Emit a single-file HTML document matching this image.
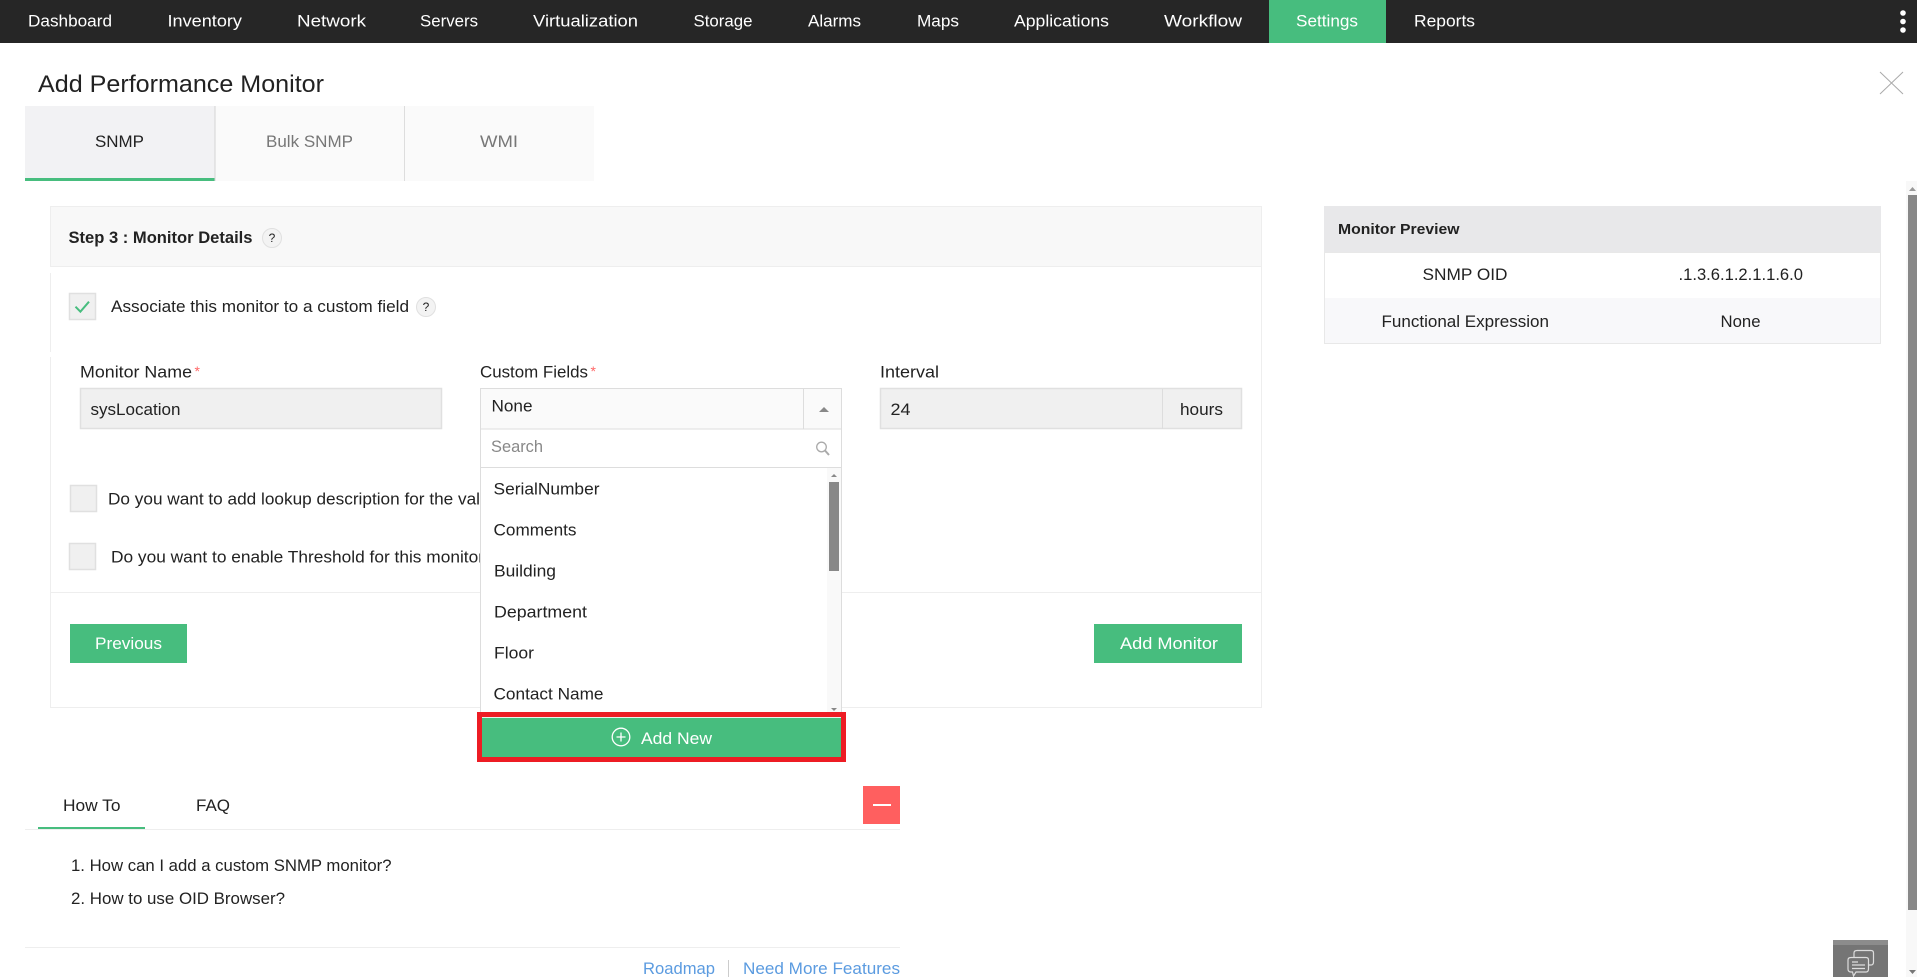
<!DOCTYPE html>
<html lang="en">
<head>
<meta charset="utf-8">
<title>Add Performance Monitor</title>
<style>
html,body{margin:0;padding:0;background:#fff;width:1917px;height:977px;overflow:hidden}
svg{display:block}
text{font-family:"Liberation Sans",Arial,sans-serif;font-size:17px;fill:#222;white-space:pre}
.n text{fill:#fff}
.b{stroke:#e0e0e0;stroke-width:1.5;fill:#f0f0f0}
.l{fill:#eee}
</style>
</head>
<body>
<svg xmlns="http://www.w3.org/2000/svg" width="1917" height="977" viewBox="0 0 1917 977">
<rect width="1917" height="977" fill="#fff"/>

<!-- top nav -->
<rect width="1917" height="43" fill="#262626"/>
<rect x="1269" width="117" height="43" fill="#47bd7e"/>
<g class="n">
<text x="28" y="26.5" textLength="84" lengthAdjust="spacingAndGlyphs">Dashboard</text>
<text x="167.500" y="26.5" textLength="74.500" lengthAdjust="spacingAndGlyphs">Inventory</text>
<text x="297" y="26.5" textLength="69" lengthAdjust="spacingAndGlyphs">Network</text>
<text x="420" y="26.5" textLength="58" lengthAdjust="spacingAndGlyphs">Servers</text>
<text x="533" y="26.5" textLength="105" lengthAdjust="spacingAndGlyphs">Virtualization</text>
<text x="693.500" y="26.5" textLength="59" lengthAdjust="spacingAndGlyphs">Storage</text>
<text x="808" y="26.5" textLength="53" lengthAdjust="spacingAndGlyphs">Alarms</text>
<text x="917" y="26.5" textLength="42" lengthAdjust="spacingAndGlyphs">Maps</text>
<text x="1014" y="26.5" textLength="95" lengthAdjust="spacingAndGlyphs">Applications</text>
<text x="1164" y="26.5" textLength="78" lengthAdjust="spacingAndGlyphs">Workflow</text>
<text x="1296" y="26.5" textLength="62" lengthAdjust="spacingAndGlyphs">Settings</text>
<text x="1414" y="26.5" textLength="61" lengthAdjust="spacingAndGlyphs">Reports</text>
</g>
<circle cx="1903" cy="13" r="2.8" fill="#fff"/>
<circle cx="1903" cy="21.5" r="2.8" fill="#fff"/>
<circle cx="1903" cy="30" r="2.8" fill="#fff"/>

<!-- title + close -->
<text x="38" y="92" style="font-size:24px" textLength="286" lengthAdjust="spacingAndGlyphs">Add Performance Monitor</text>
<path d="M1880 72L1903 94M1903 72L1880 94" stroke="#aaa" stroke-width="1" fill="none"/>

<!-- tabs -->
<rect x="25" y="106" width="190" height="75" fill="#f2f2f4"/>
<rect x="215" y="106" width="379" height="75" fill="#fafafa"/>
<rect x="25" y="178" width="190" height="3" fill="#47bd7e"/>
<rect x="214.5" y="106" width="1" height="75" fill="#d4d4d4"/>
<rect x="404" y="106" width="1" height="75" fill="#ddd"/>
<text x="95" y="147" textLength="49" lengthAdjust="spacingAndGlyphs">SNMP</text>
<text x="266" y="147" style="fill:#777" textLength="87" lengthAdjust="spacingAndGlyphs">Bulk SNMP</text>
<text x="480" y="147" style="fill:#777" textLength="38" lengthAdjust="spacingAndGlyphs">WMI</text>

<!-- panel -->
<rect x="50.5" y="206.5" width="1211" height="60" fill="#f8f8f8" stroke="#eee"/>
<rect x="50" y="273" width="1" height="79" class="l"/>
<rect x="50" y="357" width="1" height="350" class="l"/>
<rect x="1261" y="267" width="1" height="441" class="l"/>
<rect x="50" y="592" width="1212" height="1" class="l"/>
<rect x="50" y="707" width="1212" height="1" class="l"/>
<text x="68.5" y="243" style="font-weight:bold;font-size:16.5px" textLength="184" lengthAdjust="spacingAndGlyphs">Step 3 : Monitor Details</text>
<circle cx="272" cy="238" r="9.5" fill="#f3f3f3" stroke="#e0e0e0"/>
<text x="272" y="242" style="font-size:12px" text-anchor="middle">?</text>

<rect x="69.5" y="293.5" width="26" height="26" class="b"/>
<path d="M75.5 306.7L80.4 311.7L89 301.7" stroke="#47bd7e" stroke-width="2" fill="none"/>
<text x="111" y="312" textLength="298" lengthAdjust="spacingAndGlyphs">Associate this monitor to a custom field</text>
<circle cx="426" cy="307" r="9.5" fill="#f3f3f3" stroke="#e0e0e0"/>
<text x="426" y="311" style="font-size:12px" text-anchor="middle">?</text>

<!-- fields -->
<text x="80" y="377.5" textLength="112" lengthAdjust="spacingAndGlyphs">Monitor Name</text>
<text x="194.500" y="376" style="fill:#f66;font-size:14px">*</text>
<rect x="80.5" y="388.500" width="361" height="40" class="b"/>
<text x="90.5" y="415" textLength="90" lengthAdjust="spacingAndGlyphs">sysLocation</text>

<text x="480" y="377.5" textLength="108" lengthAdjust="spacingAndGlyphs">Custom Fields</text>
<text x="590.5" y="376" style="fill:#f66;font-size:14px">*</text>

<text x="880" y="377.5" textLength="59" lengthAdjust="spacingAndGlyphs">Interval</text>
<rect x="880.5" y="388.500" width="361" height="40" class="b"/>
<rect x="1162" y="389" width="1" height="40" fill="#ddd"/>
<text x="890.500" y="415" textLength="20" lengthAdjust="spacingAndGlyphs">24</text>
<text x="1180" y="415" textLength="43" lengthAdjust="spacingAndGlyphs">hours</text>

<!-- checkboxes -->
<rect x="70.5" y="485.500" width="26" height="26" class="b"/>
<text x="108" y="504.5" textLength="372" lengthAdjust="spacingAndGlyphs">Do you want to add lookup description for the val</text>
<rect x="69.5" y="543.500" width="26" height="26" class="b"/>
<text x="111" y="562.5" textLength="373" lengthAdjust="spacingAndGlyphs">Do you want to enable Threshold for this monitor</text>

<!-- buttons -->
<rect x="70" y="624" width="117" height="39" fill="#47bd7e"/>
<text x="95" y="649" style="fill:#fff" textLength="67" lengthAdjust="spacingAndGlyphs">Previous</text>
<rect x="1094" y="624" width="148" height="39" fill="#47bd7e"/>
<text x="1120" y="649" style="fill:#fff" textLength="98" lengthAdjust="spacingAndGlyphs">Add Monitor</text>

<!-- dropdown -->
<rect x="480.500" y="388.500" width="361" height="325" fill="#fff" stroke="#ddd"/>
<rect x="481" y="389" width="360" height="40" fill="#fafafa"/>
<rect x="480" y="428.500" width="362" height="1" fill="#ddd"/>
<rect x="803" y="389" width="1" height="40" fill="#ddd"/>
<path d="M819 412L824 407L829 412Z" fill="#888"/>
<text x="491.500" y="411.5" textLength="41" lengthAdjust="spacingAndGlyphs">None</text>
<text x="491" y="452" style="fill:#888" textLength="52" lengthAdjust="spacingAndGlyphs">Search</text>
<circle cx="821.5" cy="447" r="4.800" fill="none" stroke="#aaa" stroke-width="1.3"/>
<path d="M825 450.500L829 455" stroke="#aaa" stroke-width="2" fill="none"/>
<rect x="480" y="467" width="362" height="1" fill="#ddd"/>
<text x="493.500" y="494.5" textLength="106" lengthAdjust="spacingAndGlyphs">SerialNumber</text>
<text x="493.500" y="535.5" textLength="83" lengthAdjust="spacingAndGlyphs">Comments</text>
<text x="494" y="576.5" textLength="62" lengthAdjust="spacingAndGlyphs">Building</text>
<text x="494" y="617.5" textLength="93" lengthAdjust="spacingAndGlyphs">Department</text>
<text x="494" y="658.5" textLength="40" lengthAdjust="spacingAndGlyphs">Floor</text>
<text x="493.500" y="699.5" textLength="110" lengthAdjust="spacingAndGlyphs">Contact Name</text>
<rect x="827" y="468" width="14" height="245" fill="#f9f9f9"/>
<rect x="829" y="482" width="10" height="89" fill="#888"/>
<path d="M831 477L834 474L837 477Z" fill="#888"/>
<path d="M831 708L834 711L837 708Z" fill="#888"/>

<!-- add new highlighted -->
<rect x="479.500" y="714.500" width="364" height="45" fill="#47bd7e" stroke="#ed1c24" stroke-width="5"/>
<rect x="482" y="717" width="359" height="1" fill="#e6f5ec"/>
<circle cx="621" cy="737" r="8.800" fill="none" stroke="#fff" stroke-width="1.300"/>
<path d="M616.500 737H625.500M621 732.500V741.500" stroke="#fff" stroke-width="1.300"/>
<text x="641" y="744" style="fill:#fff" textLength="71" lengthAdjust="spacingAndGlyphs">Add New</text>

<!-- monitor preview -->
<rect x="1324" y="206" width="557" height="46" fill="#e8e8ea"/>
<rect x="1324.500" y="252.500" width="556" height="91" fill="#fff" stroke="#e8e8e8"/>
<rect x="1325" y="298" width="555" height="45" fill="#f8f8fa"/>
<text x="1338" y="234" style="font-weight:bold;font-size:15px" textLength="121.500" lengthAdjust="spacingAndGlyphs">Monitor Preview</text>
<text x="1422.500" y="280" textLength="85" lengthAdjust="spacingAndGlyphs">SNMP OID</text>
<text x="1678.500" y="280" textLength="124.500" lengthAdjust="spacingAndGlyphs">.1.3.6.1.2.1.1.6.0</text>
<text x="1381.500" y="327" textLength="167.500" lengthAdjust="spacingAndGlyphs">Functional Expression</text>
<text x="1720.500" y="327" textLength="40" lengthAdjust="spacingAndGlyphs">None</text>

<!-- how to -->
<text x="63" y="811" textLength="57.500" lengthAdjust="spacingAndGlyphs">How To</text>
<text x="196" y="811" textLength="34" lengthAdjust="spacingAndGlyphs">FAQ</text>
<rect x="863" y="786" width="37" height="38" fill="#ff5f5f"/>
<rect x="873" y="804" width="18" height="2" fill="#fff"/>
<rect x="25" y="829" width="875" height="1" class="l"/>
<rect x="38" y="827" width="107" height="2" fill="#47bd7e"/>
<text x="71" y="871" textLength="320.500" lengthAdjust="spacingAndGlyphs">1. How can I add a custom SNMP monitor?</text>
<text x="71" y="904" textLength="214" lengthAdjust="spacingAndGlyphs">2. How to use OID Browser?</text>
<rect x="25" y="947" width="875" height="1" class="l"/>
<text x="643" y="974" style="fill:#5b9be0" textLength="72" lengthAdjust="spacingAndGlyphs">Roadmap</text>
<rect x="728" y="960" width="1" height="17" fill="#ccc"/>
<text x="743" y="974" style="fill:#5b9be0" textLength="157" lengthAdjust="spacingAndGlyphs">Need More Features</text>

<!-- page scrollbar -->
<rect x="1906" y="181" width="11" height="796" fill="#f8f8f8"/>
<path d="M1909 191L1912.500 187L1916 191Z" fill="#999"/>
<rect x="1908" y="195" width="9" height="715" fill="#888"/>
<path d="M1909 970L1912.500 974L1916 970Z" fill="#777"/>

<!-- chat widget -->
<rect x="1833" y="940" width="55" height="37" fill="#757575"/>
<rect x="1833" y="940" width="55" height="5" fill="#8c8c8c"/>
<path d="M1854 957V953Q1854 950.500 1857 950.500H1871Q1873.500 950.500 1873.500 953V962Q1873.500 965 1871 965H1869" fill="none" stroke="#ddd" stroke-width="1.200"/>
<path d="M1851 957.500H1866Q1868.500 957.500 1868.500 960V969Q1868.500 972 1866 972H1856L1853.500 976L1852.500 972H1851Q1848 972 1848 969V960Q1848 957.500 1851 957.500Z" fill="#757575" stroke="#ddd" stroke-width="1.200"/>
<path d="M1852 962H1858M1852 965H1865M1852 968.500H1865" stroke="#ddd" stroke-width="1.200"/>
</svg>
</body>
</html>
